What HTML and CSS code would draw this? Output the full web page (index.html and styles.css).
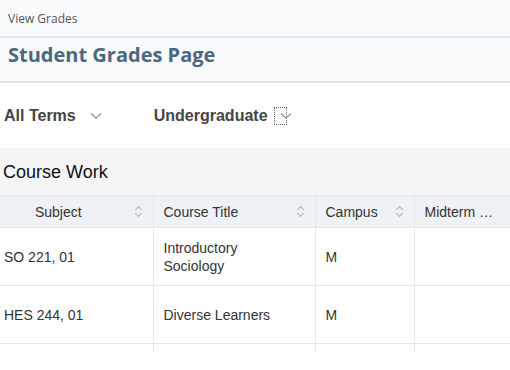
FILE: index.html
```html
<!DOCTYPE html>
<html lang="en">
<head>
    <meta charset="UTF-8">
    <meta name="viewport" content="width=device-width, initial-scale=1.0">
    <title>View Grades</title>
    <link rel="stylesheet" href="styles.css">
</head>
<body>
    <div class="page-head">
        <div class="crumb">View Grades</div>
        <h1 class="title">Student Grades Page</h1>
    </div>
    <div class="filters">
        <div class="select">
            <span>All Terms</span>
            <svg class="chev" width="12" height="8" viewBox="0 0 12 8"><path d="M1 1.5 L6 6 L11 1.5" fill="none" stroke="#a0a0a0" stroke-width="1.6"/></svg>
        </div>
        <div class="select">
            <span>Undergraduate</span>
            <span class="focus">
                <svg class="chev" width="12" height="8" viewBox="0 0 12 8"><path d="M1 1.5 L6 6 L11 1.5" fill="none" stroke="#a0a0a0" stroke-width="1.6"/></svg>
            </span>
        </div>
    </div>
    <div class="section">Course Work</div>
    <div class="table-wrap">
        <table class="grades">
            <colgroup>
                <col class="col-subject">
                <col class="col-title">
                <col class="col-campus">
                <col class="col-mid">
            </colgroup>
            <thead>
                <tr>
                    <th class="center">Subject <i class="sort"></i></th>
                    <th>Course Title <i class="sort"></i></th>
                    <th>Campus <i class="sort"></i></th>
                    <th>Midterm …</th>
                </tr>
            </thead>
            <tbody>
                <tr>
                    <td>SO 221, 01</td>
                    <td>Introductory<br>Sociology</td>
                    <td>M</td>
                    <td></td>
                </tr>
                <tr>
                    <td>HES 244, 01</td>
                    <td>Diverse Learners</td>
                    <td>M</td>
                    <td></td>
                </tr>
                <tr>
                    <td></td>
                    <td></td>
                    <td></td>
                    <td></td>
                </tr>
            </tbody>
        </table>
    </div>
</body>
</html>
```
FILE: styles.css
```css
body {
    margin: 0;
    font-family: "Liberation Sans", Arial, sans-serif;
    background: #ffffff;
    color: #333333;
    width: 510px;
    overflow: hidden;
}
.page-head {
    background: #f8fafc;
    font-family: "Open Sans", sans-serif;
}
.crumb {
    height: 36px;
    line-height: 38px;
    padding-left: 8px;
    font-size: 12px;
    color: #555555;
    border-bottom: 2px solid #dfe7ea;
}
.title {
    margin: 0;
    height: 43px;
    padding-left: 8px;
    font-size: 20px;
    line-height: 33px;
    font-weight: 700;
    color: #4b6881;
    border-bottom: 2px solid #dfe7ea;
}
.filters {
    display: flex;
    gap: 52px;
    height: 65px;
    align-items: center;
    padding-left: 4px;
}
.select {
    display: flex;
    align-items: center;
    gap: 14px;
    font-size: 16px;
    font-weight: bold;
    color: #444444;
}
.select + .select {
    gap: 6px;
}
.chev {
    display: block;
}
.focus {
    display: flex;
    align-items: center;
    width: 11px;
    height: 16px;
    border: 1px dotted #666666;
    margin-top: 1px;
}
.focus .chev {
    margin-left: 5px;
    flex-shrink: 0;
}
.section {
    background: #f5f5f5;
    height: 47px;
    line-height: 48px;
    padding-left: 3px;
    font-size: 18px;
    color: #111111;
}
.table-wrap {
    height: 157px;
    overflow: hidden;
}
.grades {
    border-collapse: collapse;
    table-layout: fixed;
    width: 510px;
    font-size: 14px;
}
.col-subject { width: 153px; }
.col-title { width: 162px; }
.col-campus { width: 99px; }
.col-mid { width: 96px; }
.grades th {
    background: #eef1f6;
    height: 31px;
    font-weight: normal;
    color: #333333;
    text-align: left;
    padding: 0 10px;
    border-top: 1px solid #e3e6ea;
    border-bottom: 1px solid #e3e6ea;
    border-right: 1px solid #e3e6ea;
    position: relative;
    white-space: nowrap;
}
.grades th.center {
    text-align: center;
    padding-right: 46px;
}
.grades td {
    height: 57px;
    padding: 0 4px 0 10px;
    border-bottom: 1px solid #e3e6ea;
    border-right: 1px solid #e3e6ea;
    line-height: 18px;
}
.grades td:first-child {
    padding-left: 4px;
}
.sort {
    position: absolute;
    right: 10px;
    top: 10px;
    width: 8px;
    height: 11px;
}
.sort::before,
.sort::after {
    content: "";
    position: absolute;
    left: 1px;
    width: 4px;
    height: 4px;
    border-left: 1.3px solid #b0b0b0;
    border-top: 1.3px solid #b0b0b0;
}
.sort::before {
    top: 1px;
    transform: rotate(45deg);
}
.sort::after {
    top: 5px;
    transform: rotate(225deg);
}
```
